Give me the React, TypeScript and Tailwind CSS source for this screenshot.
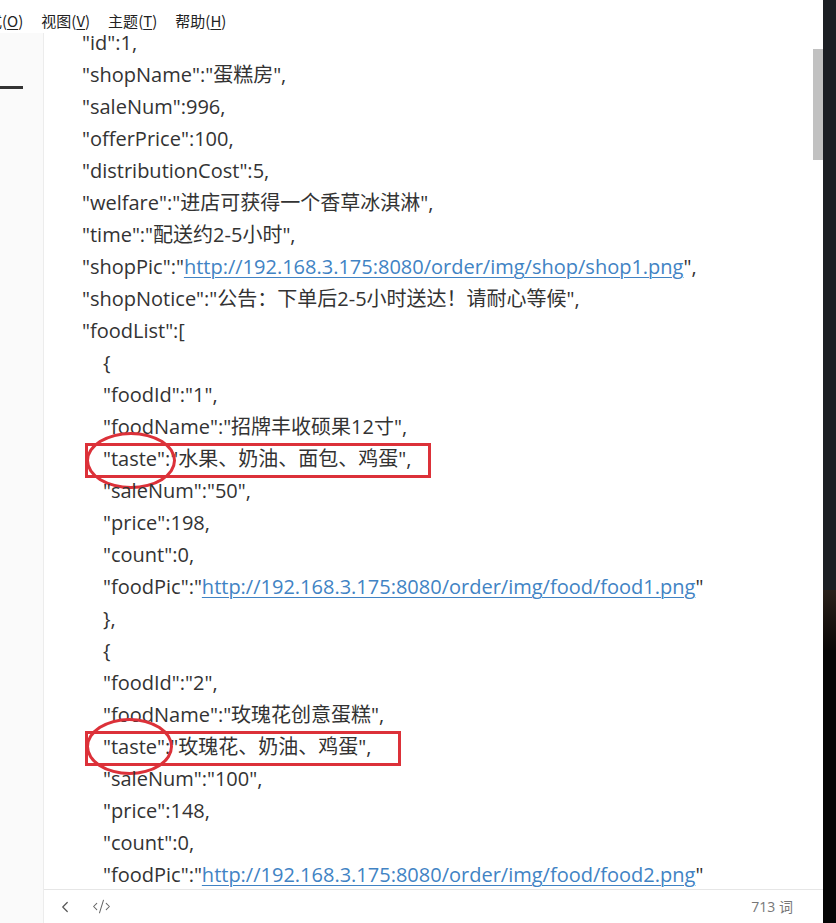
import React from 'react';
import { ChevronLeft, CodeXml } from 'lucide-react';

type Seg = { t: string; link?: boolean };
type Line = { indent: 1 | 2; segs: Seg[]; mark?: 'wide' | 'narrow' };

const L = (indent: 1 | 2, text: string, mark?: 'wide' | 'narrow'): Line => ({ indent, segs: [{ t: text }], mark });
const Link = (indent: 1 | 2, key: string, url: string): Line => ({
  indent,
  segs: [{ t: `"${key}":"` }, { t: url, link: true }, { t: indent === 1 ? '",' : '"' }],
});

const lines: Line[] = [
  L(1, '"id":1,'),
  L(1, '"shopName":"蛋糕房",'),
  L(1, '"saleNum":996,'),
  L(1, '"offerPrice":100,'),
  L(1, '"distributionCost":5,'),
  L(1, '"welfare":"进店可获得一个香草冰淇淋",'),
  L(1, '"time":"配送约2-5小时",'),
  Link(1, 'shopPic', 'http://192.168.3.175:8080/order/img/shop/shop1.png'),
  L(1, '"shopNotice":"公告：下单后2-5小时送达！请耐心等候",'),
  L(1, '"foodList":['),
  L(2, '{'),
  L(2, '"foodId":"1",'),
  L(2, '"foodName":"招牌丰收硕果12寸",'),
  L(2, '"taste":"水果、奶油、面包、鸡蛋",', 'wide'),
  L(2, '"saleNum":"50",'),
  L(2, '"price":198,'),
  L(2, '"count":0,'),
  Link(2, 'foodPic', 'http://192.168.3.175:8080/order/img/food/food1.png'),
  L(2, '},'),
  L(2, '{'),
  L(2, '"foodId":"2",'),
  L(2, '"foodName":"玫瑰花创意蛋糕",'),
  L(2, '"taste":"玫瑰花、奶油、鸡蛋",', 'narrow'),
  L(2, '"saleNum":"100",'),
  L(2, '"price":148,'),
  L(2, '"count":0,'),
  Link(2, 'foodPic', 'http://192.168.3.175:8080/order/img/food/food2.png'),
];

function MenuItem({ label, hot }: { label: string; hot: string }) {
  return (
    <span className="whitespace-nowrap">
      {label}(<span className="underline underline-offset-2">{hot}</span>)
    </span>
  );
}

export default function App() {
  return (
    <div
      className="flex h-[923px] w-[836px] overflow-hidden bg-white text-[#333]"
      style={{ fontFamily: '"Open Sans", "Noto Sans CJK SC", sans-serif' }}
    >
      <div className="flex min-w-0 flex-1 flex-col">
        {/* menu bar */}
        <div
          className="relative z-10 flex h-[27px] shrink-0 items-start gap-[18px] pt-[10px] text-[15px] leading-[22px] text-[#222]"
          style={{ fontFamily: '"Noto Sans CJK SC", "Liberation Sans", sans-serif' }}
        >
          <span className="-ml-[13px] whitespace-nowrap">
            式(<span className="underline underline-offset-2">O</span>)
          </span>
          <MenuItem label="视图" hot="V" />
          <MenuItem label="主题" hot="T" />
          <MenuItem label="帮助" hot="H" />
        </div>

        <div className="flex min-h-0 flex-1">
          {/* sidebar */}
          <div className="mt-[6px] flex w-[44px] shrink-0 flex-col border-r border-[#ececec] bg-[#fafafa]">
            <div className="mt-[53px] h-[3px] w-[23px] bg-[#333]" />
          </div>

          {/* editor */}
          <div className="flex min-w-0 flex-1 flex-col">
            <div className="flex min-h-0 flex-1">
              <div className="min-w-0 flex-1 overflow-hidden">
                <div className="text-[20px] leading-[32px]">
                  {lines.map((ln, i) => (
                    <div
                      key={i}
                      className={`relative h-[32px] whitespace-nowrap ${ln.indent === 1 ? 'pl-[38px]' : 'pl-[59px]'}`}
                    >
                      {ln.segs.map((s, j) =>
                        s.link ? (
                          <span key={j} className="text-[#4183c4] underline decoration-1 underline-offset-[3px]">
                            {s.t}
                          </span>
                        ) : (
                          <span key={j}>{s.t}</span>
                        )
                      )}
                      {ln.mark && (
                        <>
                          <div
                            className={`absolute top-[0px] left-[41px] h-[35px] border-[3px] border-[#dc3139] ${
                              ln.mark === 'wide' ? 'w-[346px]' : 'w-[316px]'
                            }`}
                          />
                          <div
                            className={`absolute left-[42px] h-[57px] rounded-[50%] border-[3px] border-[#dc3139] ${
                              ln.mark === 'wide' ? '-top-[11px] w-[90px]' : '-top-[13px] w-[87px]'
                            }`}
                          />
                        </>
                      )}
                    </div>
                  ))}
                </div>
              </div>
              {/* scrollbar */}
              <div className="w-[10px] shrink-0">
                <div className="mt-[22px] h-[111px] w-[10px] bg-[#c1c1c1]" />
              </div>
            </div>

            {/* status bar */}
            <div className="flex h-[34px] shrink-0 items-center border-t border-[#e6e6e6] pr-[30px] text-[#777]">
              <ChevronLeft size={18} strokeWidth={1.6} className="ml-[12px] text-[#555]" />
              <CodeXml size={19} strokeWidth={1.3} className="ml-[18px] text-[#666]" />
              <span className="ml-auto text-[14px]" style={{ fontFamily: '"Open Sans", "Noto Sans CJK SC", sans-serif' }}>
                713 词
              </span>
            </div>
          </div>
        </div>
      </div>

      {/* dark strip beside window */}
      <div className="flex w-[13px] shrink-0 flex-col">
        <div className="h-[590px] bg-[#1c1f24]" />
        <div className="h-[60px] bg-gradient-to-b from-[#2a211b] to-[#0b0807]" />
        <div className="flex-1 bg-[#050505]" />
      </div>
    </div>
  );
}
